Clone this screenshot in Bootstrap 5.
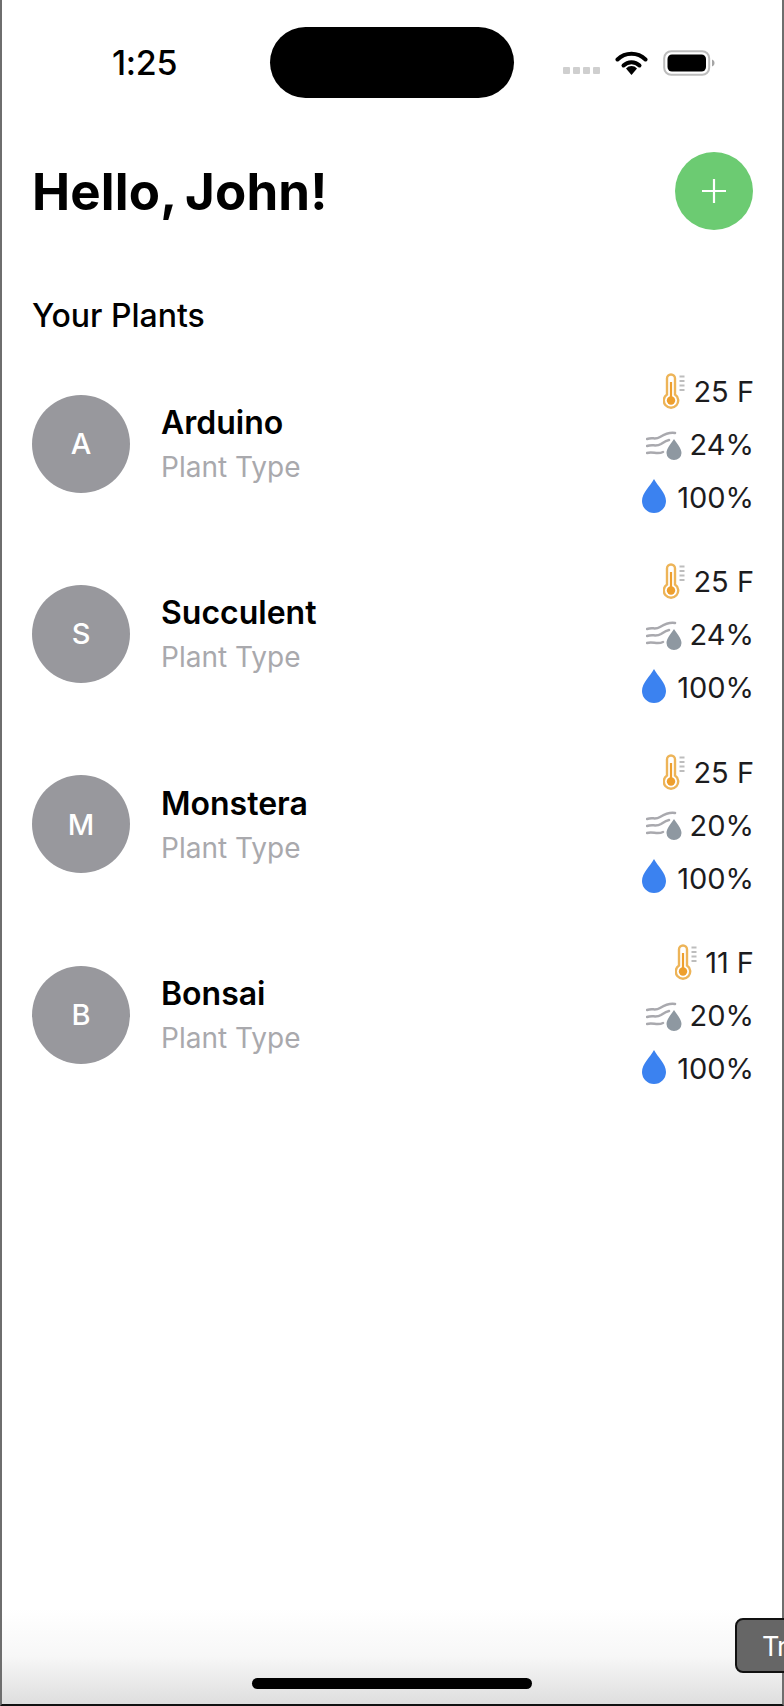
<!DOCTYPE html>
<html lang="en">
<head>
  <meta charset="UTF-8" />
  <meta name="viewport" content="width=device-width, initial-scale=1.0"/>
  <title>Your Plants</title>
  <link href="https://cdn.jsdelivr.net/npm/bootstrap@5.3.0/dist/css/bootstrap.min.css" rel="stylesheet">
  <style>
    html, body {
      height: 100%;
      margin: 0;
    }

    body {
      position: relative;
      font-family: Inter, "Liberation Sans", sans-serif;
      color: #000;
      background: #fff;
      overflow: hidden;
    }

    .phone-frame {
      position: relative;
      height: 1706px;
      border-left: 2px solid #6e6e6e;
      border-right: 2px solid #6e6e6e;
      border-bottom: 2px solid #111;
      overflow: hidden;
    }

    .status-row {
      height: 71px;
      margin-top: 27px;
      padding: 0 30px 0 110px;
    }

    .status-time {
      width: 158px;
      font-size: 34px;
      font-weight: 500;
      line-height: 1;
      letter-spacing: -.3px;
    }

    .status-island {
      flex: none;
      width: 244px;
      height: 71px;
      background: #000;
      border-radius: 36px;
    }

    .status-icons {
      margin-left: 49px;
      gap: 15px;
    }

    .signal-dots {
      gap: 3px;
      margin-top: 16px;
    }

    .signal-dots span {
      width: 7px;
      height: 7px;
      border-radius: 1px;
      background: #cfcfcf;
    }

    .top-head {
      margin-top: 54px;
      padding: 0 29px 0 30px;
    }

    .hello-title {
      font-size: 51px;
      font-weight: 700;
      line-height: 1;
      letter-spacing: .15px;
      word-spacing: -3px;
      margin: 0;
    }

    .add-btn {
      width: 78px;
      height: 78px;
      padding: 0;
      background: #6ccb72;
      border: 0;
      border-radius: 50%;
    }

    .section-title {
      font-size: 32px;
      font-weight: 500;
      line-height: 36px;
      margin: 68px 0 0 30px;
    }

    .plant-list {
      margin-top: 31px;
      padding: 0 28px 0 30px;
      gap: 31.4px;
    }

    .plant-avatar {
      flex: none;
      width: 98px;
      height: 98px;
      border-radius: 50%;
      background: #98989d;
      color: #fff;
      font-size: 29px;
      font-weight: 500;
      margin: 0 31px 2px 0;
    }

    .plant-name {
      font-size: 32px;
      font-weight: 600;
      line-height: 36px;
      margin-bottom: 9px;
    }

    .plant-type {
      font-size: 28px;
      line-height: 34px;
      color: #a9a9ad;
    }

    .stat-line {
      height: 53px;
      font-size: 29px;
      color: #1c1c1e;
      gap: 8px;
    }

    .stat-line svg {
      flex: none;
    }

    .stat-line .drop-icon {
      margin: -4px 3px 0 0;
    }

    .fade-bottom {
      position: absolute;
      left: 0;
      right: 0;
      bottom: 0;
      height: 95px;
      background: linear-gradient(to bottom, rgba(247,247,247,0), #f7f7f7 50%, #dedede);
    }

    .home-bar {
      position: absolute;
      left: 250px;
      bottom: 15px;
      width: 280px;
      height: 11px;
      border-radius: 6px;
      background: #000;
    }

    .hint-tip {
      position: absolute;
      left: 735px;
      top: 1618px;
      width: 60px;
      height: 55px;
      padding: 12px 0 0 25px;
      background: #666;
      border: 2px solid #111;
      border-radius: 8px;
      color: #fff;
      font-size: 27px;
      letter-spacing: -1px;
      line-height: 30px;
      white-space: nowrap;
    }
  </style>
</head>
<body>

  <svg width="0" height="0" class="d-block">
    <defs>
      <symbol id="ic-temp" viewBox="0 0 22 37">
        <path d="M4 21.500V5.500a4 4 0 0 1 8 0v16a7.200 7.200 0 1 1-8 0z" fill="none" stroke="#edb458" stroke-width="2.400"/>
        <circle cx="8" cy="27.500" r="4.200" fill="#ee9f2d"/>
        <path d="M8 27V9" stroke="#ee9f2d" stroke-width="2.200"/>
        <path d="M16.500 3.500h5M16.500 8h5M16.500 12.500h5M16.500 17h5" stroke="#bdbdbd" stroke-width="1.800"/>
      </symbol>
      <symbol id="ic-humid" viewBox="0 0 36 30">
        <path d="M1 9c6-2 8 1 13-2s9-5 15-4M1 16c6-2 9 1 14-2 3-2 5-3.500 8-4M1 23c6-2 10 2 16-1" fill="none" stroke="#a9a9ae" stroke-width="2.500" stroke-linecap="round"/>
        <path d="M28 9c3 5 7.500 9 7.500 14a7.500 7 0 0 1-15 0c0-5 4.500-9 7.500-14z" fill="#8e98a1"/>
      </symbol>
      <symbol id="ic-drop" viewBox="0 0 24 34">
        <path d="M12 0c3.500 7 12 13.500 12 22a12 12 0 0 1-24 0C0 13.500 8.500 7 12 0z" fill="#3b82f0"/>
      </symbol>
    </defs>
  </svg>

  <div class="phone-frame">
    <div class="status-row d-flex align-items-center">
      <div class="status-time">1:25</div>
      <div class="status-island"></div>
      <div class="status-icons d-flex align-items-center">
        <div class="signal-dots d-flex"><span></span><span></span><span></span><span></span></div>
        <svg width="33" height="26" viewBox="0 0 32 26">
          <path d="M2 9.500a20 20 0 0 1 28 0" fill="none" stroke="#000" stroke-width="4" stroke-linecap="round"/>
          <path d="M8 15.500a11.500 11.500 0 0 1 16 0" fill="none" stroke="#000" stroke-width="4" stroke-linecap="round"/>
          <path d="M16 25l-5.500-6.500a7.500 7.500 0 0 1 11 0z" fill="#000"/>
        </svg>
        <svg width="52" height="26" viewBox="0 0 52 26">
          <rect x="1.200" y="1.200" width="45" height="23.600" rx="7" fill="none" stroke="#bdbdbd" stroke-width="2"/>
          <rect x="4.500" y="4.500" width="38.500" height="17" rx="4.500" fill="#000"/>
          <path d="M49 9.500c2 .8 2.500 2 2.500 3.500s-.5 2.700-2.500 3.500z" fill="#a5a5a5"/>
        </svg>
      </div>
    </div>

    <div class="top-head d-flex justify-content-between align-items-center">
      <h1 class="hello-title">Hello, John!</h1>
      <button type="button" class="add-btn btn d-flex align-items-center justify-content-center" aria-label="Add plant">
        <svg width="26" height="26" viewBox="0 0 26 26"><path d="M13 1v24M1 13h24" stroke="#fff" stroke-width="2.200"/></svg>
      </button>
    </div>

    <div class="section-title">Your Plants</div>

    <div class="plant-list d-flex flex-column">

      <div class="d-flex align-items-center">
        <div class="plant-avatar d-flex align-items-center justify-content-center">A</div>
        <div class="flex-grow-1">
          <div class="plant-name">Arduino</div>
          <div class="plant-type">Plant Type</div>
        </div>
        <div>
          <div class="stat-line d-flex align-items-center justify-content-end"><svg width="22" height="37"><use href="#ic-temp"/></svg>25 F</div>
          <div class="stat-line d-flex align-items-center justify-content-end"><svg width="36" height="30"><use href="#ic-humid"/></svg>24%</div>
          <div class="stat-line d-flex align-items-center justify-content-end"><svg class="drop-icon" width="24" height="34"><use href="#ic-drop"/></svg>100%</div>
        </div>
      </div>

      <div class="d-flex align-items-center">
        <div class="plant-avatar d-flex align-items-center justify-content-center">S</div>
        <div class="flex-grow-1">
          <div class="plant-name">Succulent</div>
          <div class="plant-type">Plant Type</div>
        </div>
        <div>
          <div class="stat-line d-flex align-items-center justify-content-end"><svg width="22" height="37"><use href="#ic-temp"/></svg>25 F</div>
          <div class="stat-line d-flex align-items-center justify-content-end"><svg width="36" height="30"><use href="#ic-humid"/></svg>24%</div>
          <div class="stat-line d-flex align-items-center justify-content-end"><svg class="drop-icon" width="24" height="34"><use href="#ic-drop"/></svg>100%</div>
        </div>
      </div>

      <div class="d-flex align-items-center">
        <div class="plant-avatar d-flex align-items-center justify-content-center">M</div>
        <div class="flex-grow-1">
          <div class="plant-name">Monstera</div>
          <div class="plant-type">Plant Type</div>
        </div>
        <div>
          <div class="stat-line d-flex align-items-center justify-content-end"><svg width="22" height="37"><use href="#ic-temp"/></svg>25 F</div>
          <div class="stat-line d-flex align-items-center justify-content-end"><svg width="36" height="30"><use href="#ic-humid"/></svg>20%</div>
          <div class="stat-line d-flex align-items-center justify-content-end"><svg class="drop-icon" width="24" height="34"><use href="#ic-drop"/></svg>100%</div>
        </div>
      </div>

      <div class="d-flex align-items-center">
        <div class="plant-avatar d-flex align-items-center justify-content-center">B</div>
        <div class="flex-grow-1">
          <div class="plant-name">Bonsai</div>
          <div class="plant-type">Plant Type</div>
        </div>
        <div>
          <div class="stat-line d-flex align-items-center justify-content-end"><svg width="22" height="37"><use href="#ic-temp"/></svg>11 F</div>
          <div class="stat-line d-flex align-items-center justify-content-end"><svg width="36" height="30"><use href="#ic-humid"/></svg>20%</div>
          <div class="stat-line d-flex align-items-center justify-content-end"><svg class="drop-icon" width="24" height="34"><use href="#ic-drop"/></svg>100%</div>
        </div>
      </div>

    </div>

    <div class="fade-bottom"></div>
    <div class="home-bar"></div>
  </div>

  <div class="hint-tip">Tr</div>

  <script src="https://cdn.jsdelivr.net/npm/bootstrap@5.3.0/dist/js/bootstrap.bundle.min.js"></script>
</body>
</html>
